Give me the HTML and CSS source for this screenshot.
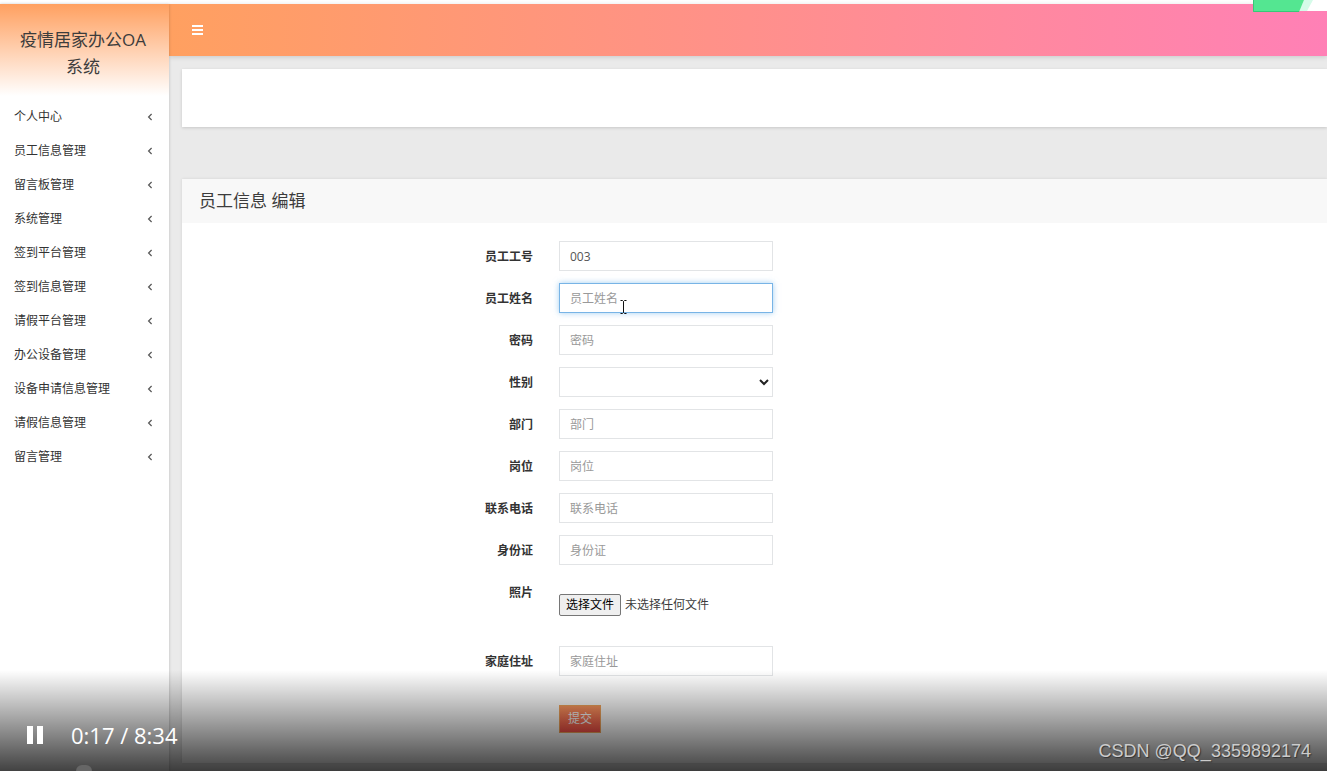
FILE: index.html
```html
<!DOCTYPE html>
<html lang="zh-CN">
<head>
<meta charset="utf-8">
<title>疫情居家办公OA系统</title>
<link rel="stylesheet" href="styles.css">
</head>
<body>
<svg class="sprite" width="0" height="0" aria-hidden="true">
  <symbol id="chev" viewBox="0 0 6 8"><path d="M4.6 1 1.6 4l3 3" fill="none" stroke="currentColor" stroke-width="1.2"/></symbol>
</svg>
<div class="app">
  <aside class="sidebar">
    <h1 class="brand">疫情居家办公OA系统</h1>
    <nav class="menu">
      <a class="item" href="#">个人中心<svg class="chev"><use href="#chev"/></svg></a>
      <a class="item" href="#">员工信息管理<svg class="chev"><use href="#chev"/></svg></a>
      <a class="item" href="#">留言板管理<svg class="chev"><use href="#chev"/></svg></a>
      <a class="item" href="#">系统管理<svg class="chev"><use href="#chev"/></svg></a>
      <a class="item" href="#">签到平台管理<svg class="chev"><use href="#chev"/></svg></a>
      <a class="item" href="#">签到信息管理<svg class="chev"><use href="#chev"/></svg></a>
      <a class="item" href="#">请假平台管理<svg class="chev"><use href="#chev"/></svg></a>
      <a class="item" href="#">办公设备管理<svg class="chev"><use href="#chev"/></svg></a>
      <a class="item" href="#">设备申请信息管理<svg class="chev"><use href="#chev"/></svg></a>
      <a class="item" href="#">请假信息管理<svg class="chev"><use href="#chev"/></svg></a>
      <a class="item" href="#">留言管理<svg class="chev"><use href="#chev"/></svg></a>
    </nav>
  </aside>
  <div class="main">
    <header class="topbar">
      <button class="toggle" type="button" aria-label="菜单">
        <svg width="11" height="10" viewBox="0 0 11 10"><path d="M0 1h11M0 5h11M0 9h11" stroke="currentColor" stroke-width="2"/></svg>
      </button>
    </header>
    <main class="content">
      <div class="crumbs"></div>
      <section class="panel">
        <h2 class="title">员工信息 编辑</h2>
        <form class="form">
          <div class="row"><label class="label" for="no">员工工号</label><input class="input" id="no" type="text" value="003"></div>
          <div class="row"><label class="label" for="name">员工姓名</label>
            <div class="field">
              <input class="input active" id="name" type="text" placeholder="员工姓名">
              <svg class="ibeam" width="7" height="14" viewBox="0 0 7 14"><path d="M.5.5h2l1 1 1-1h2M3.500 1.500v11M.5 13.500h2l1-1 1 1h2" fill="none" stroke="#111"/></svg>
            </div>
          </div>
          <div class="row"><label class="label" for="pwd">密码</label><input class="input" id="pwd" type="password" placeholder="密码"></div>
          <div class="row"><label class="label" for="sex">性别</label><select class="input select" id="sex"><option></option><option>男</option><option>女</option></select></div>
          <div class="row"><label class="label" for="dept">部门</label><input class="input" id="dept" type="text" placeholder="部门"></div>
          <div class="row"><label class="label" for="post">岗位</label><input class="input" id="post" type="text" placeholder="岗位"></div>
          <div class="row"><label class="label" for="tel">联系电话</label><input class="input" id="tel" type="text" placeholder="联系电话"></div>
          <div class="row"><label class="label" for="idc">身份证</label><input class="input" id="idc" type="text" placeholder="身份证"></div>
          <div class="row"><label class="label" for="photo">照片</label>
            <label class="file"><input class="file-input" id="photo" type="file"><span class="file-btn">选择文件</span><span>未选择任何文件</span></label>
          </div>
          <div class="row"><label class="label" for="addr">家庭住址</label><input class="input" id="addr" type="text" placeholder="家庭住址"></div>
          <div class="row submit-row"><button class="submit" type="button">提交</button></div>
        </form>
      </section>
    </main>
  </div>
  <svg class="ribbon" width="74" height="12" viewBox="0 0 74 12"><path d="M46 0h28v11H46z" fill="#fff"/><path d="M51 0h9l-6 11h-8z" fill="#d5fbe9"/><path d="M0 0h51l-5 12H0z" fill="#54e691"/><path d="M.5 0v11.500H46" fill="none" stroke="#37c878"/></svg>
  <div class="player">
    <button class="pause" type="button" aria-label="暂停">
      <svg width="16" height="18" viewBox="0 0 16 18"><path d="M0 0h6v18H0zM10 0h6v18h-6z" fill="currentColor"/></svg>
    </button>
    <span class="time">0:17 / 8:34</span>
    <span class="mark">CSDN @QQ_3359892174</span>
    <span class="knob"></span>
  </div>
</div>
</body>
</html>
```
FILE: styles.css
```css
* { box-sizing: border-box; }
body {
  margin: 0;
  background: #fff;
  color: #3c3c3c;
  font: 12px/20px "Open Sans", "Noto Sans CJK SC", sans-serif;
}
button, input, select { font: inherit; color: inherit; }
.sprite { position: absolute; }
.app {
  position: relative;
  display: flex;
  min-height: 100vh;
  padding-top: 4px;
  overflow: hidden;
}
.sidebar {
  flex: none;
  width: 169px;
  background: #fff;
  box-shadow: 0 0 3px rgba(0, 0, 0, .2);
  z-index: 1;
}
.brand {
  margin: 0;
  padding: 22px 16px 16px 13px;
  background: linear-gradient(#ffa060, #fff);
  font-size: 17px;
  font-weight: 400;
  line-height: 27px;
  text-align: center;
}
.menu { display: flex; flex-direction: column; padding-top: 4px; }
.item {
  display: flex;
  align-items: center;
  justify-content: space-between;
  height: 34px;
  padding: 0 16px 0 14px;
  color: #333;
  text-decoration: none;
}
.chev { width: 6px; height: 8px; color: #555; }
.main { flex: 1; min-width: 0; display: flex; flex-direction: column; background: #eaeaea; }
.topbar {
  display: flex;
  align-items: center;
  height: 52px;
  padding: 0 23px;
  background: linear-gradient(90deg, #ffa060, #ff80b6);
  box-shadow: 0 1px 5px rgba(0, 0, 0, .15);
}
.toggle { display: flex; padding: 0; border: 0; background: none; color: #fff; }
.content { flex: 1; display: flex; flex-direction: column; gap: 52px; padding: 13px 0 8px 13px; }
.crumbs { height: 58px; background: #fff; box-shadow: 0 1px 3px rgba(0, 0, 0, .15); }
.panel { flex: 1; background: #fff; box-shadow: 0 0 3px rgba(0, 0, 0, .1); }
.title {
  margin: 0;
  padding: 8px 17px;
  background: #f8f8f8;
  font-size: 17px;
  font-weight: 400;
  line-height: 28px;
}
.form { display: flex; flex-direction: column; gap: 12px; padding: 18px 0 30px; }
.row { display: grid; grid-template-columns: 351fr 214fr 528fr; column-gap: 26px; align-items: start; }
.label { padding-top: 2px; font-weight: 700; line-height: 28px; text-align: right; color: #333; }
.field { position: relative; }
.input {
  display: block;
  width: 100%;
  height: 30px;
  padding: 1px 10px 0;
  border: 1px solid #e2e4e6;
  border-radius: 0;
  background: #fff;
  color: #555;
  outline: 0;
}
.input::placeholder { color: #999; opacity: 1; }
.active { border-color: #78b4e6; box-shadow: 0 0 6px rgba(102, 175, 233, .6); }
.select { padding: 0 2px; color: #222; }
.ibeam { position: absolute; left: 61px; top: 17px; }
.file { position: relative; display: flex; align-items: center; gap: 4px; padding: 17px 0 18px; white-space: nowrap; }
.file-input { position: absolute; width: 1px; height: 1px; opacity: 0; }
.file-btn { padding: 0 6px; border: 1px solid #767676; border-radius: 2px; background: #efefef; color: #000; }
.submit-row { padding-top: 17px; }
.submit {
  grid-column: 2;
  justify-self: start;
  height: 28px;
  padding: 0 8px;
  border: 1px solid #f3a55c;
  background: linear-gradient(#ff9a60, #fa5048);
  color: #fff;
}
.ribbon { position: absolute; top: 0; right: 0; }
.player {
  position: absolute;
  inset: auto 0 0;
  z-index: 2;
  display: flex;
  align-items: center;
  height: 101px;
  padding: 28px 16px 0 27px;
  background: linear-gradient(rgba(0, 0, 0, 0), rgba(0, 0, 0, .74));
  color: #fff;
}
.pause { display: flex; padding: 0; border: 0; background: none; color: #fff; }
.time { margin-left: 28px; font-size: 22px; font-weight: 500; line-height: 28px; }
.mark {
  align-self: flex-end;
  margin-left: auto;
  padding-bottom: 10px;
  color: #ccc;
  font: 18px/20px "Liberation Sans", sans-serif;
  text-shadow: 1px 1px 1px #333;
}
.knob {
  position: absolute;
  left: 76px;
  bottom: 0;
  width: 16px;
  height: 6px;
  border-radius: 8px 8px 0 0;
  background: #666;
}
```
